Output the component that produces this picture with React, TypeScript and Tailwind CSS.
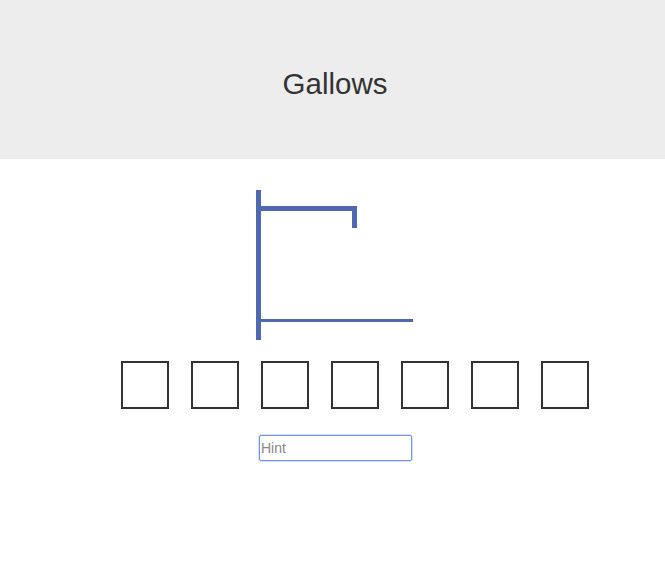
import React from "react";

const LETTERS = 7;

function Gallows() {
  return (
    <svg width="160" height="160" viewBox="0 0 160 160" className="block">
      <g fill="#5068b0">
        <rect x="1" y="4" width="5" height="150" />
        <rect x="1" y="20" width="101" height="5" />
        <rect x="97" y="20" width="5" height="22" />
        <rect x="3" y="133" width="155" height="3" />
      </g>
    </svg>
  );
}

export default function App() {
  return (
    <div className="min-h-screen bg-white font-['Liberation_Sans',Arial,sans-serif]">
      <header className="h-[159px] bg-[#ededed] flex items-center justify-center">
        <h1 className="text-[29.5px] text-[#333] pt-[10px] pl-[5px]">Gallows</h1>
      </header>

      <div className="pl-[255px] pt-[27px]">
        <Gallows />
      </div>

      <div className="flex gap-[22px] pl-[121px] mt-[15px]">
        {Array.from({ length: LETTERS }).map((_, i) => (
          <div key={i} className="w-[48px] h-[48px] border-2 border-[#333]" />
        ))}
      </div>

      <div className="pl-[259px] mt-[26px]">
        <input
          type="text"
          placeholder="Hint"
          className="w-[153px] h-[26px] border border-[#6f98e4] rounded-[2px] px-[1px] text-[14px] text-[#333] placeholder:text-[#888] outline-none shadow-[0_0_0_0.5px_#a9c2f0]"
        />
      </div>
    </div>
  );
}
